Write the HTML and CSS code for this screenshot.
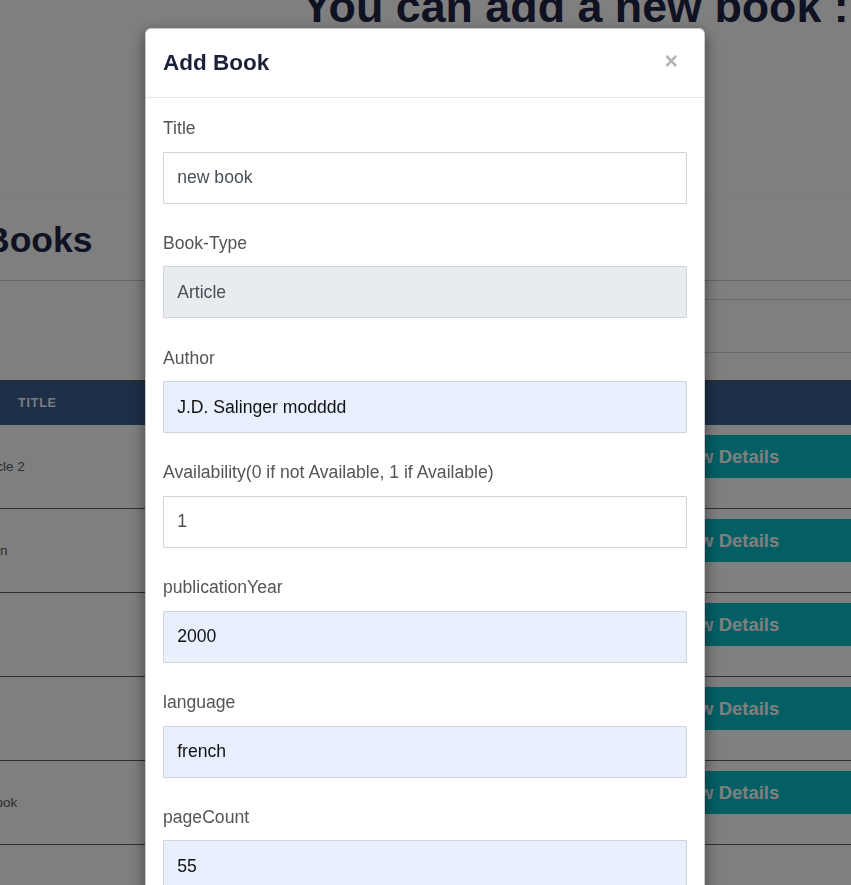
FILE: index.html
```html
<!DOCTYPE html>
<html lang="en">
<head>
<meta charset="utf-8">
<title>Books</title>
<link rel="stylesheet" href="styles.css">
</head>
<body>
<div class="page">
  <header class="hero">
    <h1 class="hero-title">You can add a new book :</h1>
  </header>
  <main class="content">
    <h2 class="section-title">Books</h2>
    <hr class="rule">
    <div class="toolbar"><input class="search" type="text" aria-label="Search"></div>
    <table class="books">
      <colgroup><col class="col-title"><col class="col-action"></colgroup>
      <thead>
        <tr><th class="th-title">Title</th><th></th></tr>
      </thead>
      <tbody>
        <tr><td class="cell-title">Article 2</td><td class="cell-action"><button class="btn-details">View Details</button></td></tr>
        <tr><td class="cell-title">Eden</td><td class="cell-action"><button class="btn-details">View Details</button></td></tr>
        <tr><td class="cell-title">Tao</td><td class="cell-action"><button class="btn-details">View Details</button></td></tr>
        <tr><td class="cell-title"></td><td class="cell-action"><button class="btn-details">View Details</button></td></tr>
        <tr><td class="cell-title">A book</td><td class="cell-action"><button class="btn-details">View Details</button></td></tr>
      </tbody>
    </table>
  </main>
</div>

<div class="backdrop"></div>

<div class="modal" role="dialog" aria-labelledby="modal-title">
  <div class="modal-header">
    <h4 class="modal-title" id="modal-title">Add Book</h4>
    <button class="close" type="button" aria-label="Close">&times;</button>
  </div>
  <form class="modal-body">
    <div class="form-group">
      <label class="form-label">Title</label>
      <input class="form-input" type="text" value="new book">
    </div>
    <div class="form-group">
      <label class="form-label">Book-Type</label>
      <input class="form-input is-readonly" type="text" value="Article" readonly>
    </div>
    <div class="form-group">
      <label class="form-label">Author</label>
      <input class="form-input is-filled" type="text" value="J.D. Salinger modddd">
    </div>
    <div class="form-group">
      <label class="form-label">Availability(0 if not Available, 1 if Available)</label>
      <input class="form-input" type="text" value="1">
    </div>
    <div class="form-group">
      <label class="form-label">publicationYear</label>
      <input class="form-input is-filled" type="text" value="2000">
    </div>
    <div class="form-group">
      <label class="form-label">language</label>
      <input class="form-input is-filled" type="text" value="french">
    </div>
    <div class="form-group">
      <label class="form-label">pageCount</label>
      <input class="form-input is-filled" type="text" value="55">
    </div>
  </form>
</div>
</body>
</html>
```
FILE: styles.css
```css
html, body {
  margin: 0;
  padding: 0;
  overflow: hidden;
  height: 100%;
}

body {
  font-family: "Liberation Sans", Arial, sans-serif;
  background: #ffffff;
  color: #212529;
}

.page {
  width: 851px;
}

.hero {
  display: flow-root;
  height: 193px;
  border-bottom: 1px solid #f8f8f8;
  box-sizing: border-box;
}

.hero-title {
  margin: -19.6px 0 0 0;
  padding-left: 302px;
  font-size: 44.8px;
  line-height: 52.8px;
  font-weight: 700;
  color: #1f2544;
  white-space: nowrap;
}

.content {
  margin-left: -40px;
  width: 891px;
  display: flow-root;
}

.section-title {
  margin: 25.7px 0 0 24px;
  font-size: 35.5px;
  line-height: 42.2px;
  font-weight: 700;
  color: #1f2544;
}

.rule {
  margin: 19px 0 0 0;
  border: 0;
  border-top: 1px solid #cccccc;
  height: 0;
}

.toolbar {
  display: flex;
  justify-content: flex-end;
  margin-top: 18px;
  margin-right: -60px;
}

.search {
  width: 480px;
  height: 54px;
  box-sizing: border-box;
  border: 1px solid #d4d4d4;
  background: #ffffff;
}

.books {
  margin-top: 27px;
  width: 891px;
  border-collapse: collapse;
  table-layout: fixed;
}

.col-title { width: 640px; }
.col-action { width: 251px; }

.books thead tr {
  height: 45px;
  background: #3c6090;
  border-top: 1px solid #555555;
}

.th-title {
  text-align: left;
  padding: 0 0 0 58px;
  font-size: 12.5px;
  font-weight: 700;
  letter-spacing: 0.8px;
  text-transform: uppercase;
  color: #f4f8ff;
}

.books tbody tr {
  border-bottom: 1px solid #5a5a5a;
}

.cell-title {
  padding: 0 0 0 16px;
  font-size: 13.5px;
  color: #5a5a5a;
  vertical-align: middle;
}

.cell-action {
  padding: 10px 0 30px 0;
  vertical-align: top;
}

.btn-details {
  display: block;
  width: 100%;
  height: 43px;
  border: 0;
  margin: 0;
  background: #08bec9;
  color: #ffffff;
  font-family: "Liberation Sans", Arial, sans-serif;
  font-size: 18.5px;
  font-weight: 700;
  text-align: center;
}

.backdrop {
  position: fixed;
  inset: 0;
  background: rgba(0, 0, 0, 0.5);
}

.modal {
  position: fixed;
  top: 28px;
  left: 145px;
  width: 560px;
  box-sizing: border-box;
  background: #ffffff;
  border: 1px solid rgba(0, 0, 0, 0.2);
  border-radius: 6px;
  box-shadow: 0 5px 15px rgba(0, 0, 0, 0.5);
}

.modal-header {
  display: flex;
  align-items: center;
  justify-content: space-between;
  height: 68px;
  padding: 0 17px;
  border-bottom: 1px solid #e5e5e5;
}

.modal-title {
  margin: 0;
  font-size: 22.5px;
  line-height: 34px;
  font-weight: 700;
  color: #1c2039;
}

.close {
  margin: -4px 9px 0 0;
  padding: 0;
  border: 0;
  background: transparent;
  font-family: "Liberation Sans", Arial, sans-serif;
  font-size: 23px;
  font-weight: 700;
  line-height: 1;
  color: #b3b3b3;
}

.modal-body {
  display: block;
  padding: 18px 17px 20px 17px;
}

.form-group {
  margin-bottom: 27.2px;
}

.form-label {
  display: block;
  margin-bottom: 10.5px;
  font-size: 17.6px;
  line-height: 25.1px;
  color: #555555;
}

.form-input {
  display: block;
  width: 100%;
  height: 52px;
  box-sizing: border-box;
  margin: 0;
  padding: 0 13.2px;
  border: 1px solid #ced4da;
  border-radius: 1px;
  background: #ffffff;
  font-family: "Liberation Sans", Arial, sans-serif;
  font-size: 17.6px;
  color: #495057;
}

.form-input.is-readonly {
  background: #e9ecef;
}

.form-input.is-filled {
  background: #e8f0fe;
  color: #111111;
}
```
